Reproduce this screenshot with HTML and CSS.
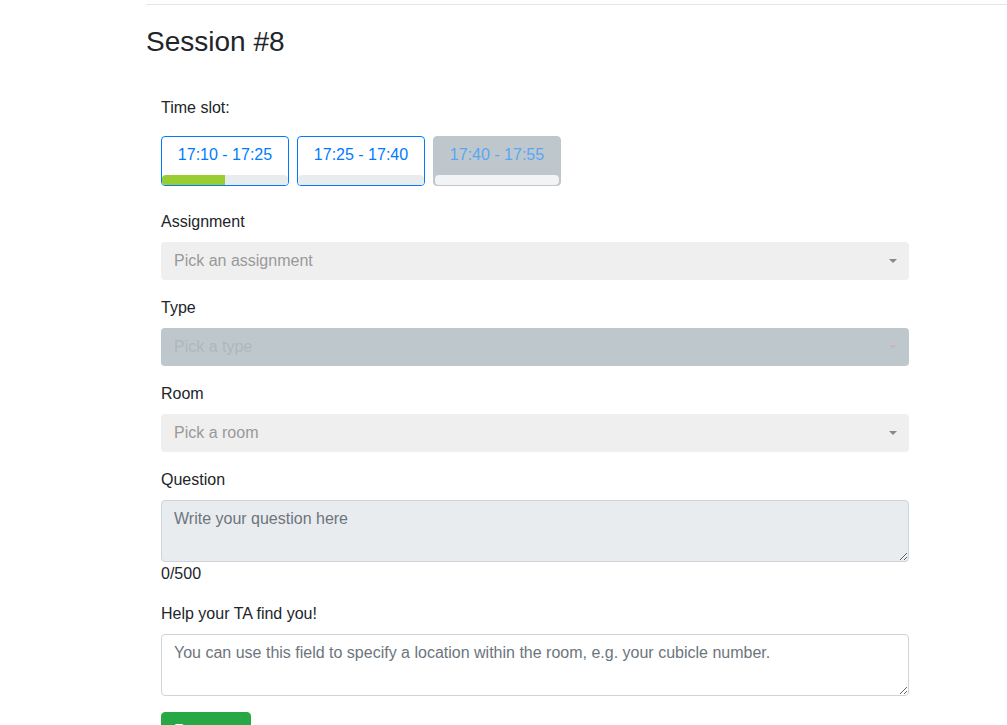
FILE: index.html
```html
<!DOCTYPE html>
<html lang="en">
<head>
    <meta charset="UTF-8">
    <meta name="viewport" content="width=device-width, initial-scale=1.0">
    <title>Session #8</title>
    <link rel="stylesheet" href="styles.css">
</head>
<body>

<div class="container">
    <hr class="top-rule">
    <h3 class="session-title">Session #8</h3>

    <form class="request-form">
        <div class="slot-label">Time slot:</div>
        <div class="slots">
            <button type="button" class="slot">
                <span class="slot-time">17:10 - 17:25</span>
                <span class="slot-bar"><span class="slot-fill" style="width: 50%"></span></span>
            </button>
            <button type="button" class="slot">
                <span class="slot-time">17:25 - 17:40</span>
                <span class="slot-bar"><span class="slot-fill" style="width: 0%"></span></span>
            </button>
            <button type="button" class="slot" disabled>
                <span class="slot-time">17:40 - 17:55</span>
                <span class="slot-bar"><span class="slot-fill" style="width: 0%"></span></span>
            </button>
        </div>

        <div class="form-group">
            <label>Assignment</label>
            <div class="picker">
                <span class="picker-text">Pick an assignment</span>
                <span class="picker-arrow"></span>
            </div>
        </div>

        <div class="form-group">
            <label>Type</label>
            <div class="picker disabled">
                <span class="picker-text">Pick a type</span>
                <span class="picker-arrow"></span>
            </div>
        </div>

        <div class="form-group">
            <label>Room</label>
            <div class="picker">
                <span class="picker-text">Pick a room</span>
                <span class="picker-arrow"></span>
            </div>
        </div>

        <div class="form-group">
            <label>Question</label>
            <textarea class="form-control question" rows="2" placeholder="Write your question here"></textarea>
            <div class="counter">0/500</div>
        </div>

        <div class="form-group">
            <label>Help your TA find you!</label>
            <textarea class="form-control" rows="2" placeholder="You can use this field to specify a location within the room, e.g. your cubicle number."></textarea>
        </div>

        <button type="submit" class="submit-button">Request</button>
    </form>
</div>

</body>
</html>
```

FILE: styles.css
```css
* {
    box-sizing: border-box;
}

body {
    margin: 0;
    font-family: 'Liberation Sans', Arial, sans-serif;
    font-size: 16px;
    line-height: 1.5;
    color: #212529;
    background-color: #fff;
}

.container {
    padding-left: 146px;
}

.top-rule {
    margin: 4px 0 0 0;
    border: 0;
    border-top: 1px solid rgba(0, 0, 0, 0.1);
}

.session-title {
    margin: 20px 0 0 0;
    font-size: 28px;
    font-weight: 400;
    line-height: 1.2;
}

.request-form {
    width: 778px;
    padding: 37px 15px 0 15px;
}

.slot-label {
    margin-bottom: 16px;
}

.slots {
    display: flex;
    gap: 8px;
    margin-bottom: 24px;
}

.slot {
    display: flex;
    flex-direction: column;
    width: 128px;
    height: 50px;
    padding: 0;
    border: 1px solid #007bff;
    border-radius: 4px;
    background-color: #fff;
    color: #007bff;
    font-family: inherit;
    font-size: 16px;
    line-height: 1.5;
    cursor: pointer;
    overflow: hidden;
}

.slot-time {
    flex: 1;
    padding-top: 6px;
    text-align: center;
}

.slot-bar {
    display: block;
    height: 10px;
    background-color: #e9ecef;
    border-radius: 4px 4px 0 0;
    overflow: hidden;
}

.slot-fill {
    display: block;
    height: 100%;
    background-color: #9acd32;
}

.slot:disabled {
    background-color: #bec8cc;
    border-color: #bec8cc;
    color: #5aa5f5;
    cursor: default;
}

.slot:disabled .slot-bar {
    background-color: #f1f3f4;
    margin: 0 1px 0 1px;
    border-radius: 4px;
}

.form-group {
    margin-bottom: 16px;
}

label {
    display: block;
    margin-bottom: 8px;
}

.picker {
    display: flex;
    align-items: center;
    height: 38px;
    padding: 0 13px;
    background-color: #efefef;
    border-radius: 4px;
    color: #999;
}

.picker-text {
    flex: 1;
}

.picker-arrow {
    width: 0;
    height: 0;
    margin-right: -1px;
    border-left: 4px solid transparent;
    border-right: 4px solid transparent;
    border-top: 4px solid #888;
}

.picker.disabled {
    background-color: #bec8cc;
    color: #acb8bd;
}

.picker.disabled .picker-arrow {
    border-top-color: #c9b7bf;
}

.form-control {
    display: block;
    width: 100%;
    padding: 6px 12px;
    font-family: inherit;
    font-size: 16px;
    line-height: 1.5;
    color: #495057;
    background-color: #fff;
    border: 1px solid #ced4da;
    border-radius: 4px;
}

.form-control::placeholder {
    color: #6c757d;
}

.question {
    background-color: #e9ecef;
}

.submit-button {
    padding: 6px 12px;
    width: 90px;
    height: 38px;
    font-family: inherit;
    font-size: 16px;
    line-height: 1.5;
    color: #fff;
    background-color: #28a745;
    border: 1px solid #28a745;
    border-radius: 4px;
    text-align: left;
    cursor: pointer;
}
```
